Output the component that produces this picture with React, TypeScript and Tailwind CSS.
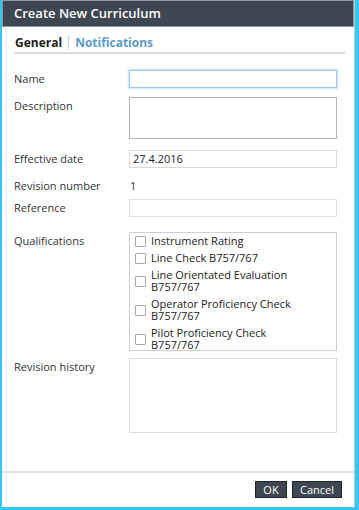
import React from "react"

const qualifications = [
  ["Instrument Rating"],
  ["Line Check B757/767"],
  ["Line Orientated Evaluation", "B757/767"],
  ["Operator Proficiency Check", "B757/767"],
  ["Pilot Proficiency Check", "B757/767"],
]

const Row = ({ label, children, className = "" }: { label: string; children: React.ReactNode; className?: string }) => (
  <div className={`flex items-start ${className}`}>
    <div className="w-[115px] shrink-0 pt-[1px] text-[11px] leading-[16px] text-[#333]">{label}</div>
    <div className="w-[208px]">{children}</div>
  </div>
)

const App = () => {
  return (
    <div className="w-[359px] h-[510px] bg-[#34c6f4] pl-[2px] pr-[4px] pb-[3px] font-['Open_Sans',sans-serif]">
      <div className="flex flex-col h-full bg-white border-r border-[#c8c8c8]">
        {/* title bar */}
        <div className="h-[27px] bg-[#3d4651] border border-[#8e9398] flex items-center pl-[11px]">
          <span className="text-white font-semibold text-[13px]">Create New Curriculum</span>
        </div>

        <div className="flex-1 px-[12px]">
          {/* tabs */}
          <div className="flex items-center h-[21px] mt-[6px] border-b-2 border-[#dcdcdc] w-[331px]">
            <span className="text-[12px] font-bold text-[#222] pl-[1px]">General</span>
            <span className="mx-[6px] h-[13px] w-px bg-[#b8d3e6]" />
            <span className="text-[12px] font-bold text-[#5b9bc6]">Notifications</span>
          </div>

          <Row label="Name" className="mt-[16px]">
            <div className="h-[18px] border border-[#9ec8ee] shadow-[0_0_2px_1px_#c5e0f8] bg-white" />
          </Row>

          <Row label="Description" className="mt-[9px]">
            <div className="h-[42px] border border-[#b4b4b4] bg-white" />
          </Row>

          <Row label="Effective date" className="mt-[11px]">
            <div className="h-[18px] border border-[#d8d8d8] bg-white px-[3px] text-[11px] leading-[16px] text-[#222]">27.4.2016</div>
          </Row>

          <Row label="Revision number" className="mt-[9px]">
            <div className="pl-[1px] pt-[1px] text-[11px] leading-[16px] text-[#333]">1</div>
          </Row>

          <Row label="Reference" className="mt-[5px]">
            <div className="h-[18px] border border-[#e0e0e0] bg-white" />
          </Row>

          <Row label="Qualifications" className="mt-[15px]">
            <div className="h-[119px] overflow-hidden border border-[#cfcfcf] bg-white pl-[5px] pt-[2px]">
              {qualifications.map((q, i) => (
                <div key={i} className="flex items-center mb-[5px]">
                  <span className="w-[11px] h-[11px] border border-[#a9a9a9] bg-white shrink-0 rounded-[1px]" />
                  <span className="ml-[5px] text-[11px] leading-[12px] text-[#222]">
                    {q.map((line, j) => (
                      <div key={j}>{line}</div>
                    ))}
                  </span>
                </div>
              ))}
            </div>
          </Row>

          <Row label="Revision history" className="mt-[7px]">
            <div className="h-[75px] border border-[#dcdcdc] bg-white" />
          </Row>
        </div>

        {/* footer */}
        <div className="border-t-2 border-[#e2e2e2] h-[36px] flex items-center justify-end gap-[5px] pr-[12px] pb-[1px]">
          <button className="h-[17px] w-[32px] bg-[#3d4651] border border-[#20252b] text-white text-[11px] leading-none">OK</button>
          <button className="h-[17px] w-[50px] bg-[#3d4651] border border-[#20252b] text-white text-[11px] leading-none">Cancel</button>
        </div>
      </div>
    </div>
  )
}

export default App
